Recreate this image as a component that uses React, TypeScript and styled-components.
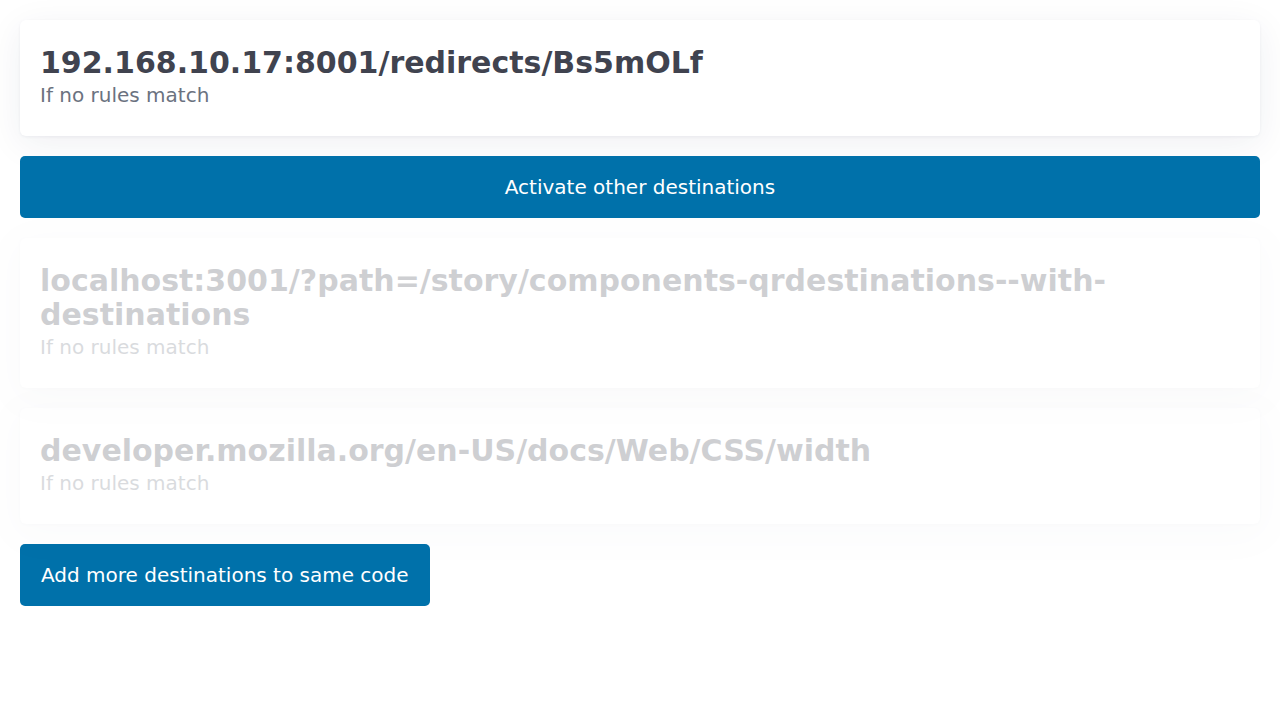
import React from "react";
import styled, { createGlobalStyle } from "styled-components";

const GlobalStyle = createGlobalStyle`
  html, body {
    margin: 0;
    padding: 0;
    background: #fff;
    font-family: "DejaVu Sans", Verdana, sans-serif;
  }
`;

const Page = styled.div`
  display: flex;
  flex-direction: column;
  align-items: flex-start;
  gap: 20px;
  padding: 20px;
`;

const Card = styled.div<{ $faded?: boolean }>`
  width: 100%;
  box-sizing: border-box;
  background: #fff;
  border-radius: 6px;
  padding: 26px 20px 27px;
  box-shadow: 0 1px 3px rgba(30, 40, 80, 0.06), 0 8px 36px rgba(30, 40, 90, 0.07);
  opacity: ${(p) => (p.$faded ? 0.25 : 1)};
`;

const Title = styled.h2`
  margin: 0;
  font-size: 30px;
  line-height: 34px;
  font-weight: 700;
  color: #40434f;
  word-break: break-word;
`;

const Subtitle = styled.p`
  margin: 1px 0 0;
  font-size: 20px;
  line-height: 28px;
  color: #6b7280;
`;

const Button = styled.button<{ $wide?: boolean }>`
  width: ${(p) => (p.$wide ? "100%" : "auto")};
  height: 62px;
  padding: 0 21px;
  border: none;
  border-radius: 5px;
  background: #0071aa;
  color: #fff;
  font-family: inherit;
  font-size: 20px;
  cursor: pointer;
`;

type Destination = { url: string; active: boolean };

const destinations: Destination[] = [
  { url: "localhost:3001/?path=/story/components-qrdestinations--with-destinations", active: false },
  { url: "developer.mozilla.org/en-US/docs/Web/CSS/width", active: false },
];

function DestinationCard({ url, faded }: { url: string; faded?: boolean }) {
  return (
    <Card $faded={faded}>
      <Title>{url}</Title>
      <Subtitle>If no rules match</Subtitle>
    </Card>
  );
}

export default function App() {
  return (
    <>
      <GlobalStyle />
      <Page>
        <DestinationCard url="192.168.10.17:8001/redirects/Bs5mOLf" />
        <Button $wide>Activate other destinations</Button>
        {destinations.map((d) => (
          <DestinationCard key={d.url} url={d.url} faded={!d.active} />
        ))}
        <Button>Add more destinations to same code</Button>
      </Page>
    </>
  );
}
